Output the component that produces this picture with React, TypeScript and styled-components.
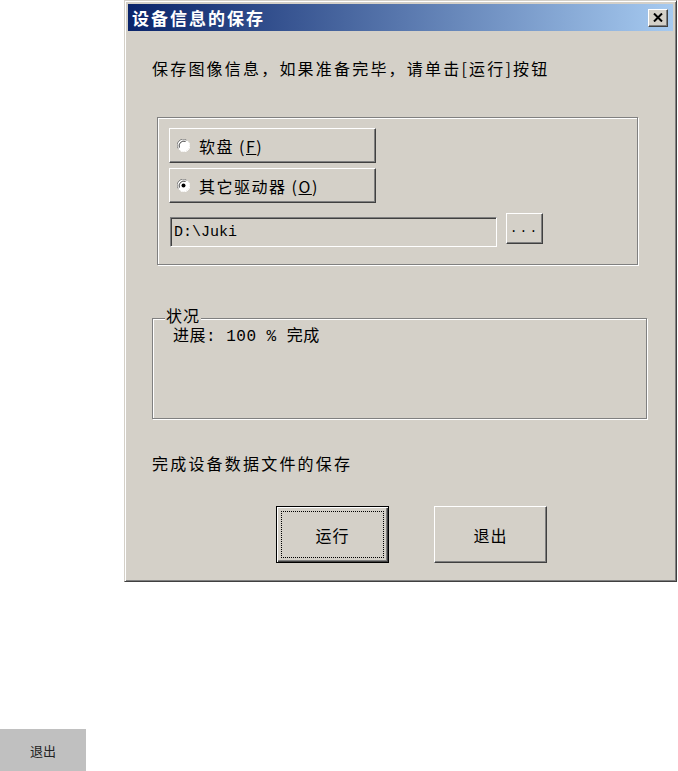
import React from "react";
import styled, { createGlobalStyle } from "styled-components";

const Global = createGlobalStyle`
  html, body { margin: 0; padding: 0; background: #ffffff; }
  body { font-family: "Noto Sans CJK SC", "Noto Sans", sans-serif; color: #000; }
`;

const FACE = "#d4d0c8";
const CJK = `"Noto Sans CJK SC", "Noto Sans", sans-serif`;
const MIX = `"Liberation Mono", "Noto Sans CJK SC", monospace`;

const Page = styled.div`
  display: flex;
  flex-direction: column;
  align-items: flex-start;
`;

const Window = styled.div`
  box-sizing: border-box;
  margin-left: 124px;
  width: 553px;
  height: 582px;
  background: ${FACE};
  border: 1px solid;
  border-color: ${FACE} #404040 #404040 ${FACE};
  box-shadow: inset 1px 1px #ffffff, inset -1px -1px #808080;
  padding: 3px 3px 2px 3px;
  display: flex;
  flex-direction: column;
`;

const TitleBar = styled.div`
  height: 27px;
  background: linear-gradient(to right, #0a246a, #a6caf0);
  display: flex;
  align-items: center;
  justify-content: space-between;
  padding: 0 5px 0 4px;
`;

const TitleText = styled.span`
  font-family: ${CJK};
  font-weight: 700;
  font-size: 17px;
  letter-spacing: 2px;
  color: #ffffff;
  line-height: 27px;
`;

const CloseBtn = styled.div`
  box-sizing: border-box;
  width: 20px;
  height: 18px;
  background: ${FACE};
  border: 1px solid;
  border-color: #ffffff #404040 #404040 #ffffff;
  box-shadow: inset -1px -1px #808080;
  display: flex;
  align-items: center;
  justify-content: center;
`;

const Content = styled.div`
  display: flex;
  flex-direction: column;
  align-items: flex-start;
  padding-left: 24px;
`;

const Label = styled.div<{ $top: number; $left?: number }>`
  font-family: ${CJK};
  font-size: 16px;
  letter-spacing: 2.2px;
  line-height: 20px;
  height: 20px;
  white-space: nowrap;
  margin-top: ${(p) => p.$top}px;
  margin-left: ${(p) => p.$left ?? 0}px;
`;

const Group = styled.div`
  box-sizing: border-box;
  margin-top: 39px;
  margin-left: 5px;
  width: 481px;
  height: 148px;
  border: 1px solid #808080;
  box-shadow: inset 1px 1px #ffffff, 1px 1px #ffffff;
  padding: 10px 0 0 11px;
  display: flex;
  flex-direction: column;
  gap: 5px;
`;

const PushRadio = styled.div`
  box-sizing: border-box;
  width: 207px;
  height: 35px;
  border: 1px solid;
  border-color: #ffffff #404040 #404040 #ffffff;
  box-shadow: inset -1px -1px #808080;
  display: flex;
  align-items: center;
  gap: 9px;
  padding-left: 7px;
  font-family: ${CJK};
  font-size: 16px;
  letter-spacing: 1.5px;
`;

const Mnemonic = styled.span`
  text-decoration: underline;
`;

const PathRow = styled.div`
  display: flex;
  align-items: flex-start;
  gap: 9px;
  margin-top: 9px;
  margin-left: 1px;
`;

const PathField = styled.div`
  box-sizing: border-box;
  width: 327px;
  height: 30px;
  border: 1px solid;
  border-color: #808080 #ffffff #ffffff #808080;
  box-shadow: inset 1px 1px #404040, inset -1px -1px ${FACE};
  padding-left: 3px;
  display: flex;
  align-items: center;
  font-family: "Liberation Mono", monospace;
  font-size: 15px;
`;

const DotsBtn = styled.div`
  box-sizing: border-box;
  margin-top: -4px;
  width: 37px;
  height: 31px;
  border: 1px solid;
  border-color: #ffffff #404040 #404040 #ffffff;
  box-shadow: inset -1px -1px #808080;
  display: flex;
  align-items: flex-end;
  justify-content: center;
  padding-bottom: 8px;
  font-family: "Liberation Mono", monospace;
  font-size: 13px;
  line-height: 13px;
  letter-spacing: 2px;
`;

const StatusGroup = styled.div`
  position: relative;
  box-sizing: border-box;
  margin-top: 53px;
  width: 495px;
  height: 101px;
  border: 1px solid #808080;
  box-shadow: inset 1px 1px #ffffff, 1px 1px #ffffff;
  padding: 8px 0 0 20px;
`;

const Legend = styled.span`
  position: absolute;
  top: -14px;
  left: 12px;
  padding: 0 1px;
  background: ${FACE};
  font-family: ${CJK};
  font-size: 16px;
  letter-spacing: 1px;
  line-height: 20px;
`;

const StatusText = styled.div`
  font-family: ${MIX};
  font-size: 16px;
  line-height: 20px;
  letter-spacing: 0.5px;
  white-space: pre;
`;

const ButtonRow = styled.div`
  display: flex;
  gap: 45px;
  margin-top: 33px;
  margin-left: 124px;
`;

const DlgButton = styled.div<{ $default?: boolean }>`
  box-sizing: border-box;
  width: 113px;
  height: 57px;
  display: flex;
  align-items: center;
  justify-content: center;
  font-family: ${CJK};
  font-size: 16px;
  letter-spacing: 1px;
  border: 1px solid;
  border-color: ${(p) => (p.$default ? "#000 #000 #000 #000" : "#ffffff #404040 #404040 #ffffff")};
  box-shadow: ${(p) =>
    p.$default
      ? "inset 1px 1px #ffffff, inset -1px -1px #404040, inset -2px -2px #808080"
      : "inset -1px -1px #808080"};
  padding: 4px;
`;

const FocusRect = styled.div`
  box-sizing: border-box;
  width: 100%;
  height: 100%;
  border: 1px dotted #000;
  display: flex;
  align-items: center;
  justify-content: center;
`;

const OuterButton = styled.div`
  margin-top: 147px;
  width: 86px;
  height: 42px;
  background: #c0c0c0;
  display: flex;
  align-items: center;
  justify-content: center;
  font-family: ${CJK};
  font-size: 13px;
  color: #222;
`;

const RadioDot = ({ checked }: { checked?: boolean }) => (
  <svg width="13" height="13" viewBox="0 0 13 13">
    <circle cx="6.5" cy="6.5" r="6" fill="#ffffff" />
    <path d="M1.2 9.5 A6 6 0 0 1 9.5 1.2" fill="none" stroke="#808080" strokeWidth="1" />
    <path d="M2.4 8.6 A4.8 4.8 0 0 1 8.6 2.4" fill="none" stroke="#404040" strokeWidth="1" />
    <path d="M3.5 11.8 A6 6 0 0 0 11.8 3.5" fill="none" stroke="#ffffff" strokeWidth="1" />
    {checked && <circle cx="6.5" cy="6.5" r="2" fill="#000" />}
  </svg>
);

const CloseIcon = () => (
  <svg width="10" height="9" viewBox="0 0 10 9">
    <path d="M1 0.5 L9 8.5 M9 0.5 L1 8.5" stroke="#000" strokeWidth="2" />
  </svg>
);

export default function App() {
  return (
    <Page>
      <Global />
      <Window>
        <TitleBar>
          <TitleText>设备信息的保存</TitleText>
          <CloseBtn>
            <CloseIcon />
          </CloseBtn>
        </TitleBar>
        <Content>
          <Label $top={27}>保存图像信息，如果准备完毕，请单击[运行]按钮</Label>
          <Group>
            <PushRadio>
              <RadioDot />
              <span>
                软盘 (<Mnemonic>F</Mnemonic>)
              </span>
            </PushRadio>
            <PushRadio>
              <RadioDot checked />
              <span>
                其它驱动器 (<Mnemonic>O</Mnemonic>)
              </span>
            </PushRadio>
            <PathRow>
              <PathField>D:\Juki</PathField>
              <DotsBtn>...</DotsBtn>
            </PathRow>
          </Group>
          <StatusGroup>
            <Legend>状况</Legend>
            <StatusText>进展: 100 % 完成</StatusText>
          </StatusGroup>
          <Label $top={34}>完成设备数据文件的保存</Label>
          <ButtonRow>
            <DlgButton $default>
              <FocusRect>运行</FocusRect>
            </DlgButton>
            <DlgButton>退出</DlgButton>
          </ButtonRow>
        </Content>
      </Window>
      <OuterButton>退出</OuterButton>
    </Page>
  );
}
